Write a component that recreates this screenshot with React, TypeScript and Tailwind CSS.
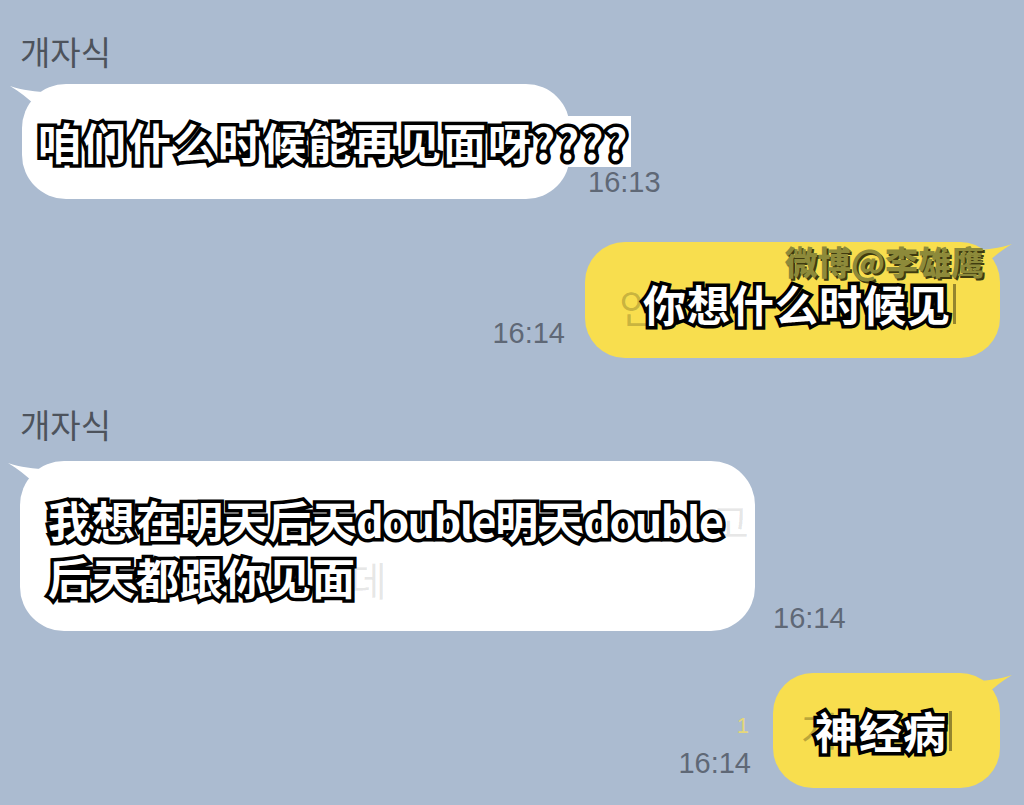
import type { ReactNode } from 'react'

const caption =
  "font-['Noto_Sans_CJK_SC',sans-serif] font-bold text-white text-[43px] tracking-[1px] leading-none whitespace-nowrap [-webkit-text-stroke:7px_#000] [paint-order:stroke_fill]"

const time = "font-['Liberation_Sans',sans-serif] text-[29px] leading-none text-[#5f6876]"

function Name() {
  return (
    <p className="ml-[20px] font-['Noto_Sans_CJK_KR',sans-serif] text-[33px] leading-none text-[#4d535c]">
      개자식
    </p>
  )
}

function LeftTail() {
  return (
    <svg className="absolute -left-[12px] top-[2px]" width="40" height="34" viewBox="0 0 40 34">
      <path d="M0 0 C12 4 26 6 40 6 L40 34 C30 24 20 12 0 0 Z" fill="#fff" />
    </svg>
  )
}

function RightTail() {
  return (
    <svg className="absolute -right-[12px] top-[2px]" width="40" height="34" viewBox="0 0 40 34">
      <path d="M40 0 C28 4 14 6 0 6 L0 34 C10 24 20 12 40 0 Z" fill="#f8de4e" />
    </svg>
  )
}

function Ghost({ children, className }: { children: ReactNode; className: string }) {
  return (
    <span className={`absolute font-['Noto_Sans_CJK_KR',sans-serif] text-[40px] leading-none text-black/10 ${className}`}>
      {children}
    </span>
  )
}

export default function App() {
  return (
    <div className="relative h-[805px] w-[1024px] overflow-hidden bg-[#abbbd0] pt-[35px]">
      <Name />

      {/* first incoming */}
      <div className="mt-[16px] flex items-end gap-[18px]">
        <div className="relative ml-[22px] flex h-[115px] w-[548px] items-center rounded-[44px] bg-white pl-[14px]">
          <LeftTail />
          <span className={`relative bg-white px-[2px] py-[4px] ${caption} tracking-[2px]`}>咱们什么时候能再见面呀????</span>
        </div>
        <span className={`mb-[2px] ${time}`}>16:13</span>
      </div>

      {/* first outgoing */}
      <div className="mt-[43px] flex items-end justify-end gap-[20px] pr-[24px]">
        <span className={`mb-[10px] ${time}`}>16:14</span>
        <div className="relative flex h-[116px] w-[415px] items-center rounded-[40px] bg-[#f8de4e] pl-[58px] pt-[6px]">
          <RightTail />
          <Ghost className="left-[34px] top-[44px] text-black/20">인</Ghost>
          <span className="absolute left-[368px] top-[42px] h-[40px] w-[3px] bg-black/40" />
          <span className="absolute right-[16px] top-[3px] font-['Noto_Sans_CJK_SC',sans-serif] text-[33px] font-black leading-none text-[#8d8a3a] [text-shadow:2px_2px_0_#3f3b10]">
            微博@李雄鹰
          </span>
          <span className={`relative ${caption}`}>你想什么时候见</span>
        </div>
      </div>

      <div className="mt-[50px]">
        <Name />
      </div>

      {/* second incoming */}
      <div className="mt-[20px] flex items-end gap-[18px]">
        <div className="relative ml-[20px] flex h-[170px] w-[735px] flex-col justify-center gap-[14px] rounded-[44px] bg-white pl-[28px] pt-[4px]">
          <LeftTail />
          <Ghost className="left-[330px] top-[98px]">데</Ghost>
          <Ghost className="left-[692px] top-[40px]">고</Ghost>
          <span className={`relative ${caption} tracking-[0px]`}>
            我想在明天后天<span className="tracking-[-1.5px]">double</span>明天<span className="tracking-[-1.5px]">double</span>
          </span>
          <span className={`relative ${caption} tracking-[0px]`}>后天都跟你见面</span>
        </div>
        <span className={`-mb-[2px] ${time}`}>16:14</span>
      </div>

      {/* second outgoing */}
      <div className="mt-[42px] flex items-end justify-end gap-[22px] pr-[24px]">
        <div className="mb-[10px] flex flex-col items-end gap-[12px]">
          <span className="mr-[2px] font-['Liberation_Sans',sans-serif] text-[22px] leading-none text-[#e6d77a]">1</span>
          <span className={time}>16:14</span>
        </div>
        <div className="relative flex h-[115px] w-[227px] items-center rounded-[40px] bg-[#f8de4e] pl-[42px]">
          <RightTail />
          <Ghost className="left-[28px] top-[36px] text-black/25">개</Ghost>
          <span className="absolute left-[176px] top-[38px] h-[40px] w-[3px] bg-black/40" />
          <span className={`relative ${caption}`}>神经病</span>
        </div>
      </div>
    </div>
  )
}
